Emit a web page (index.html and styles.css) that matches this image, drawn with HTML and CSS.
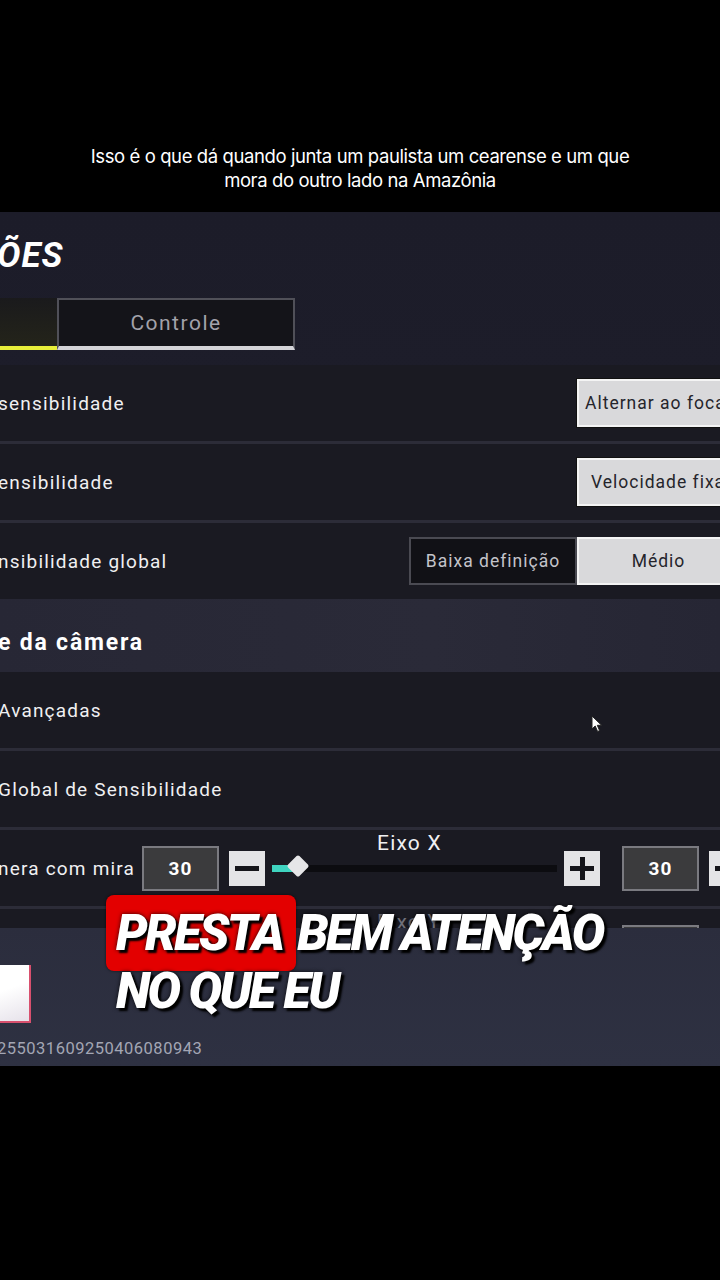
FILE: index.html
```html
<!DOCTYPE html>
<html lang="pt-BR">
<head>
  <meta charset="UTF-8">
  <meta name="viewport" content="width=device-width, initial-scale=1.0">
  <title>Configurações</title>
  <link rel="stylesheet" href="styles.css">
</head>
<body>
  <div class="caption">
    <p>Isso é o que dá quando junta um paulista um cearense e um que<br>mora do outro lado na Amazônia</p>
  </div>

  <div class="game">
    <div class="header">
      <h1>ÕES</h1>
    </div>

    <div class="tabs">
      <div class="tab active"></div>
      <div class="tab">Controle</div>
    </div>

    <div class="list">
      <div class="row">
        <span class="label">sensibilidade</span>
        <div class="select">Alternar ao focar</div>
      </div>
      <div class="row">
        <span class="label">ensibilidade</span>
        <div class="select wide">Velocidade fixa</div>
      </div>
      <div class="row">
        <span class="label">nsibilidade global</span>
        <div class="segmented">
          <div class="seg">Baixa definição</div>
          <div class="seg on">Médio</div>
        </div>
      </div>

      <div class="section">e da câmera</div>

      <div class="row">
        <span class="label">Avançadas</span>
      </div>
      <div class="row">
        <span class="label">Global de Sensibilidade</span>
      </div>
      <div class="row slider-row">
        <span class="label">nera com mira</span>
        <div class="value">30</div>
        <div class="step minus"><span></span></div>
        <div class="slider">
          <span class="axis">Eixo X</span>
          <div class="track"><div class="fill" style="width: 22px"></div><div class="thumb"></div></div>
        </div>
        <div class="step plus"><span></span><span class="v"></span></div>
        <div class="value">30</div>
        <div class="step minus"><span></span></div>
      </div>
      <div class="row partial">
        <span class="axis faded">Eixo Y</span>
        <div class="value">30</div>
      </div>
    </div>

    <div class="footer">
      <div class="avatar"></div>
      <div class="uid">255031609250406080943</div>
    </div>

    <!-- cursor left on screen -->
    <svg class="cursor" width="12" height="18" viewBox="0 0 12 18">
      <path d="M1 1 L1 14 L4.2 11 L6.6 16.5 L8.6 15.6 L6.3 10.3 L10.6 10.3 Z" fill="#fff" stroke="#222" stroke-width="1"/>
    </svg>

    <div class="overlay">
      <div class="line"><span class="chip">PRESTA</span> BEM ATENÇÃO</div>
      <div class="line">NO QUE EU</div>
    </div>
  </div>
</body>
</html>
```

FILE: styles.css
```css
body {
  margin: 0;
  width: 720px;
  height: 1280px;
  overflow: hidden;
  background: #000;
  font-family: Roboto, "DejaVu Sans", sans-serif;
}
.caption {
  height: 212px;
  padding-top: 144px;
  box-sizing: border-box;
  text-align: center;
  color: #fff;
}
.caption p {
  margin: 0;
  font-family: Inter, sans-serif;
  font-size: 18.5px;
  line-height: 24px;
  letter-spacing: -0.4px;
}
.game {
  position: relative;
  height: 854px;
  overflow: hidden;
  display: flex;
  flex-direction: column;
  background: linear-gradient(180deg, #1c1c29 0%, #1f1f2c 60%, #232433 100%);
  color: #f2f2f4;
}
.header {
  height: 86px;
  display: flex;
  align-items: center;
}
.header h1 {
  margin: 0 0 0 -3px;
  font-size: 35px;
  font-weight: 700;
  font-style: italic;
  letter-spacing: 1px;
  color: #fff;
}
.tabs {
  display: flex;
  height: 52px;
  margin-bottom: 15px;
}
.tab {
  box-sizing: border-box;
  height: 52px;
  border: 2px solid #505058;
  border-bottom: 4px solid #d4d4d8;
  background: #141419;
  color: #a2a2aa;
  font-size: 21px;
  letter-spacing: 1.5px;
  display: flex;
  align-items: center;
  justify-content: center;
  width: 238px;
}
.tab.active {
  width: 57px;
  border: none;
  border-bottom: 4px solid #e8ef3a;
  background: linear-gradient(180deg, #1a1a1c, #24241a);
}
.list {
  flex: 1;
  overflow: hidden;
  display: flex;
  flex-direction: column;
  gap: 3px;
  background: #2c2c38;
}
.row {
  flex: none;
  height: 76px;
  display: flex;
  align-items: center;
  background: #1a1a22;
}
.row > * {
  flex: none;
}
.label {
  flex: 1 !important;
  margin-left: -2px;
  font-size: 19px;
  letter-spacing: 1.2px;
  color: #f0f0f2;
  white-space: nowrap;
}
.select {
  box-sizing: border-box;
  width: 160px;
  height: 48px;
  margin-right: -17px;
  padding-left: 6px;
  background: #d9d9db;
  border: 2px solid #f4f4f4;
  box-shadow: 0 0 0 1px #111;
  color: #25252b;
  font-size: 17.5px;
  letter-spacing: 1px;
  display: flex;
  align-items: center;
  white-space: nowrap;
  overflow: hidden;
}
.select.wide {
  padding-left: 12px;
}
.segmented {
  display: flex;
  height: 48px;
  margin-right: -20px;
}
.seg {
  box-sizing: border-box;
  height: 48px;
  width: 168px;
  display: flex;
  align-items: center;
  justify-content: center;
  font-size: 17.5px;
  letter-spacing: 1px;
  background: #111116;
  border: 2px solid #4a4a52;
  color: #c4c4ca;
}
.seg.on {
  width: 163px;
  background: #d9d9db;
  border-color: #f4f4f4;
  color: #25252b;
}
.section {
  flex: none;
  height: 73px;
  margin: -3px 0 -3px;
  padding: 14px 0 0;
  box-sizing: border-box;
  display: flex;
  align-items: center;
  background: linear-gradient(90deg, #272735, #2a2a38 60%, #262634);
  font-size: 23px;
  font-weight: 700;
  letter-spacing: 1.8px;
  color: #fff;
  text-indent: -2px;
}
.slider-row .label {
  flex: none !important;
  width: 144px;
}
.value {
  box-sizing: border-box;
  width: 77px;
  height: 45px;
  background: #3b3b3d;
  border: 2px solid #7a7a80;
  color: #fff;
  font-size: 19px;
  font-weight: 700;
  letter-spacing: 1px;
  display: flex;
  align-items: center;
  justify-content: center;
}
.step {
  position: relative;
  width: 36px;
  height: 35px;
  background: #e4e4e6;
  margin-left: 10px;
}
.step span {
  position: absolute;
  left: 6px;
  right: 6px;
  top: 15px;
  height: 5px;
  background: #15151a;
}
.step .v {
  left: 15.5px;
  right: auto;
  width: 5px;
  top: 6px;
  height: 23px;
}
.step.plus {
  margin-left: 7px;
  margin-right: 22px;
}
.slider {
  position: relative;
  width: 285px;
  margin-left: 7px;
}
.axis {
  position: absolute;
  left: 105px;
  top: -34px;
  font-size: 21px;
  letter-spacing: 1.2px;
  color: #f0f0f2;
}
.partial {
  align-items: flex-start;
}
.partial .axis.faded {
  position: static;
  margin: 1px 0 0 377px;
  color: #70707a;
}
.partial .value {
  margin: 16px 0 0 auto;
  margin-right: 21px;
}
.track {
  position: relative;
  height: 7px;
  background: #0c0c10;
}
.fill {
  height: 7px;
  background: #3fd4c0;
}
.thumb {
  position: absolute;
  left: 18px;
  top: -7px;
  width: 16px;
  height: 16px;
  background: #e6e6e8;
  transform: rotate(45deg);
  border-radius: 2px;
}
.footer {
  flex: none;
  height: 138px;
  background: linear-gradient(180deg, #2b2d3d, #2e3142);
  padding-top: 37px;
  box-sizing: border-box;
}
.avatar {
  width: 31px;
  height: 58px;
  background: linear-gradient(160deg, #ffffff 40%, #e6e2ea);
  border-right: 2px solid #d8506e;
  border-bottom: 2px solid #d8506e;
  box-sizing: border-box;
}
.uid {
  margin: 16px 0 0 -3px;
  font-size: 16.5px;
  letter-spacing: 0.5px;
  color: #a3a6b4;
}
.cursor {
  position: absolute;
  left: 591px;
  top: 503px;
}
.overlay {
  position: absolute;
  left: 106px;
  top: 692px;
  font-size: 50px;
  font-weight: 900;
  font-style: italic;
  letter-spacing: -2.5px;
  word-spacing: 0;
  color: #fff;
  text-shadow: 3px 3px 2px #000, 0 0 4px rgba(0, 0, 0, 0.8);
  line-height: 58px;
}
.line {
  white-space: nowrap;
  padding-left: 10px;
}
.chip {
  display: inline-block;
  margin-left: -10px;
  margin-right: -9px;
  padding: 9px 14px 9px 10px;
  line-height: 58px;
  margin-top: -9px;
  margin-bottom: -9px;
  background: #e30000;
  border-radius: 8px;
  box-shadow: 0 0 3px rgba(0, 0, 0, 0.6);
}
```
